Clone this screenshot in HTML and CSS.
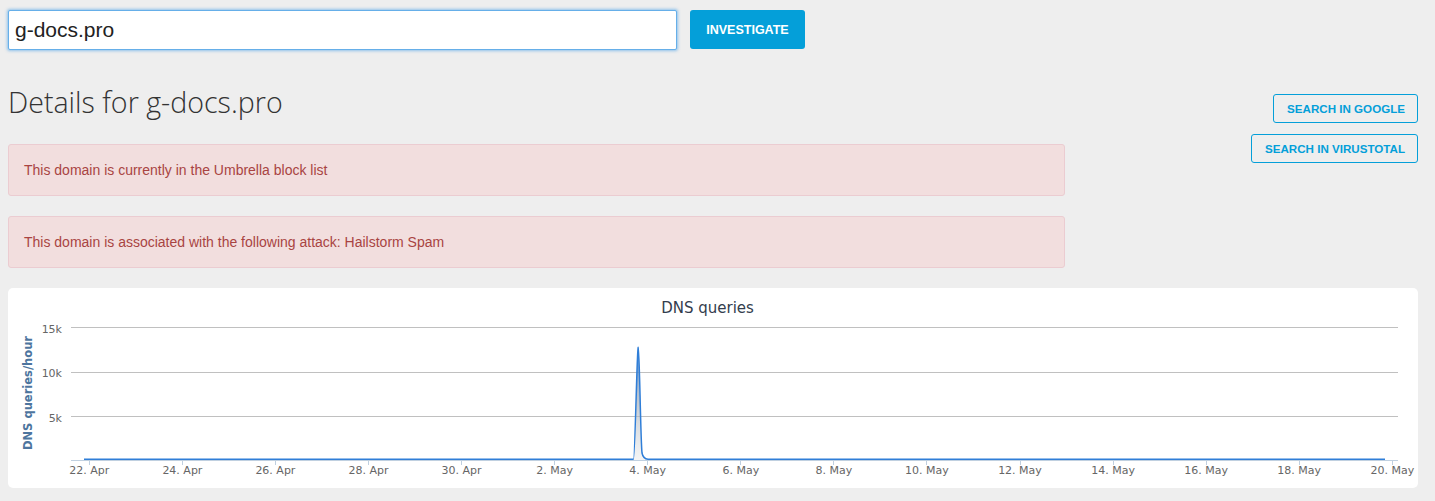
FILE: index.html
```html
<!DOCTYPE html>
<html lang="en">
<head>
<meta charset="utf-8">
<title>Investigate g-docs.pro</title>
<link rel="stylesheet" href="styles.css">
</head>
<body>
<div class="page">
  <form class="search">
    <input class="search-input" type="text" value="g-docs.pro">
    <button class="btn-primary" type="button">INVESTIGATE</button>
  </form>

  <div class="details">
    <div class="details-main">
      <h1 class="details-title">Details for g-docs.pro</h1>
      <div class="alert">This domain is currently in the Umbrella block list</div>
      <div class="alert">This domain is associated with the following attack: Hailstorm Spam</div>
    </div>
    <div class="details-actions">
      <a class="btn-outline" href="#">SEARCH IN GOOGLE</a>
      <a class="btn-outline" href="#">SEARCH IN VIRUSTOTAL</a>
    </div>
  </div>

  <div class="chart-card">
    <svg class="chart" width="1410" height="200" viewBox="0 0 1410 200" xmlns="http://www.w3.org/2000/svg">
      <defs>
        <linearGradient id="spikeFill" x1="0" y1="0" x2="0" y2="1">
          <stop offset="0" stop-color="#2f7ed8" stop-opacity="0.9"/>
          <stop offset="0.5" stop-color="#9fa9b4" stop-opacity="0.6"/>
          <stop offset="1" stop-color="#e4e4e4" stop-opacity="0.4"/>
        </linearGradient>
      </defs>
      <text class="chart-title" x="699.5" y="25" text-anchor="middle">DNS queries</text>

      <g class="grid">
        <line x1="63" y1="39.5" x2="1390" y2="39.5"/>
        <line x1="63" y1="84.5" x2="1390" y2="84.5"/>
        <line x1="63" y1="128.5" x2="1390" y2="128.5"/>
      </g>

      <g class="y-labels" text-anchor="end">
        <text x="54" y="45">15k</text>
        <text x="54" y="89">10k</text>
        <text x="54" y="134">5k</text>
      </g>
      <text class="y-title" x="24" y="105" text-anchor="middle" transform="rotate(-90 24 105)">DNS queries/hour</text>

      <path class="spike-area" d="M624,172 L625.5,171.5 C627,171.5 629,59 630.3,59.3 C631.5,59.5 632.5,150 634,165 C635,170 637,171 640,171.5 L641,172 Z"/>
      <path class="series" d="M76,171.3 L625.5,171.3 C627,171.3 629,59 630.3,59.3 C631.5,59.5 632.5,150 634,165 C635,170 637,171 640,171.3 L1377,171.3"/>

      <line class="x-axis" x1="63" y1="172.5" x2="1390" y2="172.5"/>
      <path class="ticks" d="M81.5,172 V177 M174.5,172 V177 M267.5,172 V177 M360.5,172 V177 M453.5,172 V177 M546.5,172 V177 M639.5,172 V177 M732.5,172 V177 M825.5,172 V177 M918.5,172 V177 M1012.5,172 V177 M1105.5,172 V177 M1198.5,172 V177 M1291.5,172 V177 M1384.5,172 V177"/>

      <g class="x-labels" text-anchor="middle">
        <text x="81.3" y="186">22. Apr</text>
        <text x="174.4" y="186">24. Apr</text>
        <text x="267.4" y="186">26. Apr</text>
        <text x="360.5" y="186">28. Apr</text>
        <text x="453.6" y="186">30. Apr</text>
        <text x="546.7" y="186">2. May</text>
        <text x="639.7" y="186">4. May</text>
        <text x="732.8" y="186">6. May</text>
        <text x="825.9" y="186">8. May</text>
        <text x="918.9" y="186">10. May</text>
        <text x="1012" y="186">12. May</text>
        <text x="1105.1" y="186">14. May</text>
        <text x="1198.1" y="186">16. May</text>
        <text x="1291.2" y="186">18. May</text>
        <text x="1384.3" y="186">20. May</text>
      </g>
    </svg>
  </div>
</div>
</body>
</html>
```

FILE: styles.css
```css
* { box-sizing: border-box; }

html, body {
  margin: 0;
  padding: 0;
  background: #eeeeee;
}

body {
  font-family: "Liberation Sans", Arial, Helvetica, sans-serif;
  color: #333;
}

.page {
  width: 1410px;
  margin-left: 8px;
  padding-top: 10px;
}

/* search row */
.search {
  display: flex;
  align-items: flex-start;
  gap: 13px;
  margin: 0;
}

.search-input {
  width: 669px;
  height: 40px;
  margin: 0;
  padding: 0 6px;
  border: 1px solid #66afe9;
  border-radius: 2px;
  background: #fff;
  box-shadow: 0 0 3px 1px rgba(102, 175, 233, 0.7);
  font-family: "Liberation Sans", Arial, sans-serif;
  font-size: 21px;
  color: #222;
  outline: none;
}

.btn-primary {
  width: 115px;
  height: 39px;
  margin: 0;
  padding: 0;
  border: none;
  border-radius: 3px;
  background: #049fd9;
  color: #fff;
  font-family: "Liberation Sans", Arial, sans-serif;
  font-weight: bold;
  font-size: 12.5px;
}

/* details */
.details {
  display: flex;
  justify-content: space-between;
  align-items: flex-start;
  margin-top: 36px;
}

.details-main {
  width: 1057px;
}

.details-title {
  margin: 0 0 27px 0;
  font-family: "Open Sans", sans-serif;
  font-weight: 300;
  font-size: 28.6px;
  line-height: 31px;
  color: #333;
}

.alert {
  margin-bottom: 20px;
  padding: 15px;
  border: 1px solid #ebccd1;
  border-radius: 3px;
  background: #f2dede;
  color: #a94442;
  font-size: 14px;
  line-height: 20px;
}

.details-actions {
  display: flex;
  flex-direction: column;
  align-items: flex-end;
  gap: 11px;
  margin-top: 8px;
}

.btn-outline {
  display: flex;
  align-items: center;
  height: 29px;
  padding: 0 12px 0 13px;
  border: 1px solid #049fd9;
  border-radius: 3px;
  color: #049fd9;
  font-weight: bold;
  font-size: 11.6px;
  text-decoration: none;
}

/* chart */
.chart-card {
  height: 200px;
  border-radius: 5px;
  background: #fff;
  overflow: hidden;
}

.chart {
  display: block;
}

.chart-title {
  font-family: "DejaVu Sans", Verdana, sans-serif;
  font-size: 15px;
  fill: #333d4d;
}

.grid line {
  stroke: #c0c0c0;
  stroke-width: 1;
}

.y-labels text,
.x-labels text {
  font-family: "DejaVu Sans", Verdana, sans-serif;
  font-size: 11px;
  fill: #666;
}

.y-title {
  font-family: "DejaVu Sans", Verdana, sans-serif;
  font-size: 11.5px;
  font-weight: bold;
  fill: #4d759e;
}

.x-axis {
  stroke: #c0d0e0;
  stroke-width: 1;
}

.ticks {
  stroke: #c0d0e0;
  stroke-width: 1;
}

.spike-area {
  fill: url(#spikeFill);
}

.series {
  fill: none;
  stroke: #2f7ed8;
  stroke-width: 1.5;
}
```
